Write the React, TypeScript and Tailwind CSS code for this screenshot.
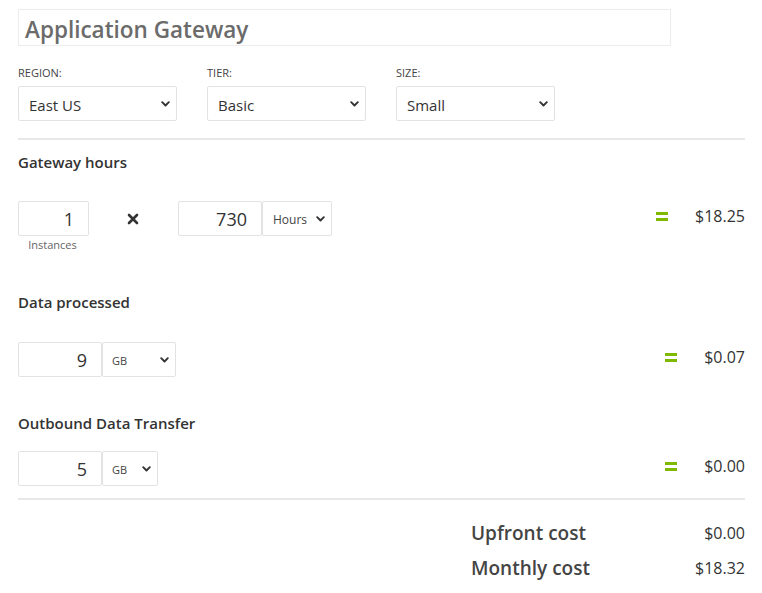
import React from "react";

const Chevron = () => (
  <svg width="9" height="6" viewBox="0 0 9 6" className="shrink-0">
    <path d="M1.2 1.2 L4.5 4.5 L7.8 1.2" fill="none" stroke="#333" strokeWidth="1.9" strokeLinecap="round" strokeLinejoin="round" />
  </svg>
);

function Select({ value, w, textCls, padL = "pl-[10px]" }: { value: string; w: string; textCls: string; padL?: string }) {
  return (
    <div className={`${w} h-[35px] border border-[#e3e3e3] rounded-[2px] flex items-center justify-between ${padL} pr-[6px] bg-white`}>
      <span className={`${textCls} pt-[3px]`}>{value}</span>
      <Chevron />
    </div>
  );
}

function NumBox({ value, w }: { value: string; w: string }) {
  return (
    <div className={`${w} h-[35px] border border-[#e3e3e3] rounded-[2px] flex items-center justify-end pr-[14px] pt-[2px] text-[18px] text-[#333]`}>
      {value}
    </div>
  );
}

function Result({ value }: { value: string }) {
  return (
    <div className="ml-auto flex items-center gap-[27px] pb-[5px]">
      <svg width="12" height="9" viewBox="0 0 12 9" className="shrink-0">
        <rect x="0" y="0" width="12" height="3" fill="#7fba00" />
        <rect x="0" y="6" width="12" height="3" fill="#7fba00" />
      </svg>
      <span className="text-[16px] text-[#333]">{value}</span>
    </div>
  );
}

export default function App() {
  return (
    <div className="w-[762px] h-[593px] bg-white pl-[18px] pr-[17px] pt-[9px] text-[#333]" style={{ fontFamily: '"Open Sans", "Noto Sans", sans-serif' }}>
      <div className="w-[653px] h-[37px] border border-[#ececec] flex items-center pl-[6px]">
        <span className="text-[22.5px] font-semibold text-[#6b6b6b] leading-none pt-[5px]">Application Gateway</span>
      </div>

      <div className="flex gap-[30px] mt-[20px]">
        {[
          ["REGION:", "East US"],
          ["TIER:", "Basic"],
          ["SIZE:", "Small"],
        ].map(([l, v]) => (
          <div key={l} className="flex flex-col">
            <div className="text-[11px] leading-[14px] text-[#444] mb-[6px]">{l}</div>
            <Select value={v} w="w-[159px]" textCls="text-[15px] text-[#333]" />
          </div>
        ))}
      </div>

      <div className="h-[2px] bg-[#e8e8e8] mt-[17px]" />

      <div className="mt-[12px] text-[15px] leading-[20px] font-semibold text-[#333]">Gateway hours</div>
      <div className="mt-[29px] flex items-start">
        <div className="flex flex-col items-center w-[71px]">
          <NumBox value="1" w="w-[71px]" />
          <div className="text-[11px] leading-[14px] text-[#666] mt-[2px] pr-[2px]">Instances</div>
        </div>
        <div className="h-[35px] flex items-center ml-[38px] text-[#333]">
          <svg width="12" height="12" viewBox="0 0 12 12">
            <path d="M2 2 L10 10 M10 2 L2 10" stroke="#333" strokeWidth="2.6" strokeLinecap="round" />
          </svg>
        </div>
        <div className="ml-[39px] flex">
          <NumBox value="730" w="w-[84px]" />
          <Select value="Hours" w="w-[70px]" textCls="text-[12px] text-[#444]" padL="pl-[10px]" />
        </div>
        <div className="h-[35px] flex items-center ml-auto">
          <Result value="$18.25" />
        </div>
      </div>

      <div className="mt-[40px] text-[15px] leading-[20px] font-semibold text-[#333]">Data processed</div>
      <div className="mt-[30px] flex items-center">
        <NumBox value="9" w="w-[84px]" />
        <Select value="GB" w="w-[74px]" textCls="text-[11px] text-[#444]" padL="pl-[9px]" />
        <Result value="$0.07" />
      </div>

      <div className="mt-[36px] text-[15px] leading-[20px] font-semibold text-[#333]">Outbound Data Transfer</div>
      <div className="mt-[18px] flex items-center">
        <NumBox value="5" w="w-[84px]" />
        <Select value="GB" w="w-[56px]" textCls="text-[11px] text-[#444]" padL="pl-[9px]" />
        <Result value="$0.00" />
      </div>

      <div className="h-[2px] bg-[#e8e8e8] mt-[12px]" />

      <div className="ml-auto w-[274px] mt-[20px] flex flex-col gap-[9px]">
        <div className="flex items-center justify-between h-[26px]">
          <span className="text-[19px] font-semibold text-[#444]">Upfront cost</span>
          <span className="text-[16px] text-[#333]">$0.00</span>
        </div>
        <div className="flex items-center justify-between h-[26px]">
          <span className="text-[19px] font-semibold text-[#444]">Monthly cost</span>
          <span className="text-[16px] text-[#333]">$18.32</span>
        </div>
      </div>
    </div>
  );
}
